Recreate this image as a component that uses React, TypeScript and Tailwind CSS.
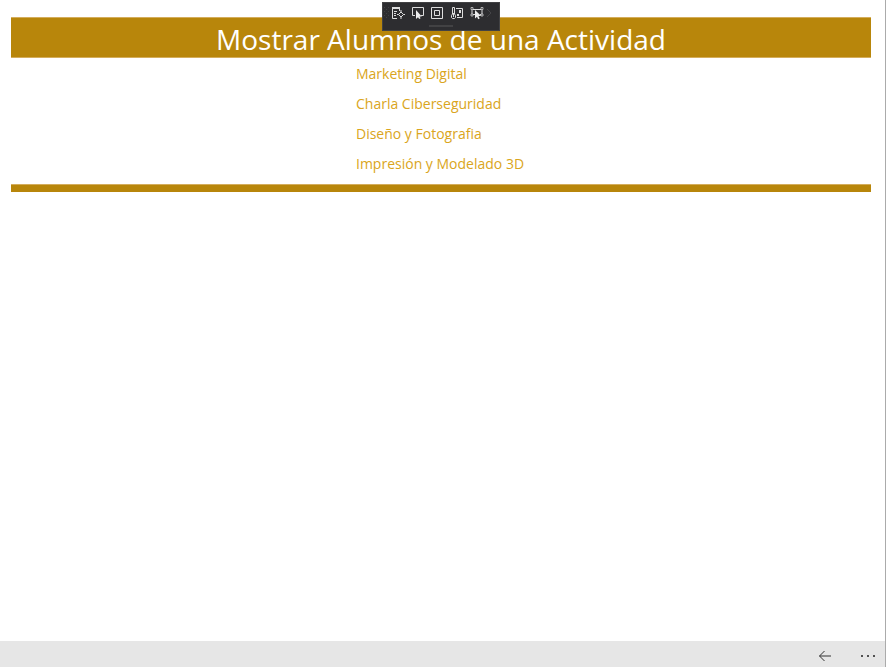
import type { ReactNode } from "react";

const actividades = [
  "Marketing Digital",
  "Charla Ciberseguridad",
  "Diseño y Fotografia",
  "Impresión y Modelado 3D",
];

function ToolButton({ label, children }: { label: string; children: ReactNode }) {
  return (
    <button type="button" aria-label={label} className="flex h-5 flex-1 items-center justify-center">
      <svg viewBox="0 0 14 14" className="h-3.5 w-3.5" fill="none" stroke="#dedede">
        {children}
      </svg>
    </button>
  );
}

function DebugToolbar() {
  return (
    <div
      role="toolbar"
      aria-label="Depuración"
      className="absolute top-0.5 left-1/2 flex h-[29px] w-[118px] -translate-x-[61px] flex-col items-center border border-[#424244] bg-[#2d2d30]"
    >
      <div className="flex w-full items-center pr-1.5">
        <svg viewBox="0 0 6 14" className="h-3.5 w-1.5" fill="#414144">
          <path d="M1 1h1v1H1zM5 1h1v1H5zM3 3h1v1H3zM1 5h1v1H1zM5 5h1v1H5zM3 7h1v1H3zM1 9h1v1H1zM5 9h1v1H5zM3 11h1v1H3z" />
        </svg>
        <ToolButton label="Ir al árbol visual dinámico">
          <path d="M1 1h8v2H1z" fill="#dedede" stroke="none" />
          <path d="M1.500 3v9.500H6M8.500 3v2M3 5.500h3M3 7.500h2M3 9.500h2" />
          <path d="M10 4v2M10 11v2M6 8.500h1.500M12.500 8.500H14M10 6l2.500 2.500L10 11 7.500 8.500z" />
        </ToolButton>
        <ToolButton label="Seleccionar elemento">
          <path d="M4 9.500H1.500v-8h11v8H10" />
          <path d="M5 4v9l2-1.800 1.200 1.800 1.400-.7-1.100-1.900h2.300z" fill="#ededed" stroke="none" />
        </ToolButton>
        <ToolButton label="Mostrar adornos de diseño">
          <path d="M1.500 1.500h11v11h-11zM4.500 4.500h5v5h-5z" />
        </ToolButton>
        <ToolButton label="Realizar seguimiento del elemento">
          <path d="M2.500 8V1.500h2V8l1 1.500v2l-1 1h-2l-1-1v-2zM3.500 7v4M6 2.500h6.500v9H7" />
          <path d="M9 4h2v3H9zM7 8h2v2H7z" fill="#dedede" stroke="none" />
        </ToolButton>
        <ToolButton label="Recarga activa">
          <path d="M3 3.500h8M2 4v4M12 4v4M3 8.500h2M10 8.500h1" />
          <path d="M1 1.500h2v2H1zM11 1.500h2v2h-2zM1 8h2v2H1zM11 8h2v2h-2z" strokeWidth=".7" />
          <path d="M5 4v8.500l2-1.800 1.200 2.600 1.500-.7-1.200-2.500h2.700z" fill="#ededed" stroke="none" />
        </ToolButton>
        <svg viewBox="0 0 6 10" className="h-2.5 w-1.5" fill="none" stroke="#454548">
          <path d="M1 1l4 4-4 4" />
        </svg>
      </div>
      <div className="mt-0.5 h-0.5 w-6 bg-[#424244]" />
    </div>
  );
}

export default function App() {
  return (
    <div className="relative flex min-h-screen flex-col border-r border-[#ababab] bg-white font-['Open_Sans','Noto_Sans',sans-serif]">
      <main className="flex-1 pt-[17px] pr-3.5 pl-[11px]">
        <h1 className="flex h-[41px] items-center justify-center border-y border-[#d4ad5c] bg-[#b8860b] pt-0.5 text-[28px] leading-10 whitespace-nowrap text-white">
          Mostrar Alumnos de una Actividad
        </h1>
        <ul className="mx-auto flex w-[170px] flex-col pt-px pb-[5px]">
          {actividades.map((nombre) => (
            <li key={nombre} className="h-[30px]">
              <button type="button" className="h-[30px] text-left text-sm leading-[30px] whitespace-nowrap text-[#daa520]">
                {nombre}
              </button>
            </li>
          ))}
        </ul>
        <div className="h-2 border-t border-[#d4ad5c] bg-[#b8860b]" />
      </main>
      <footer className="flex h-[26px] items-center justify-end gap-7 bg-[#e6e6e6] pt-1 pr-[9px]">
        <button type="button" aria-label="Atrás">
          <svg viewBox="0 0 14 12" className="h-3 w-3.5" fill="none" stroke="#333333">
            <path d="M13 6H1.500M6.500 1l-5 5 5 5" />
          </svg>
        </button>
        <button type="button" aria-label="Más opciones">
          <svg viewBox="0 0 16 4" className="h-1 w-4" fill="#1f1f1f">
            <circle cx="2" cy="2" r="1" />
            <circle cx="8" cy="2" r="1" />
            <circle cx="14" cy="2" r="1" />
          </svg>
        </button>
      </footer>
      <DebugToolbar />
    </div>
  );
}
